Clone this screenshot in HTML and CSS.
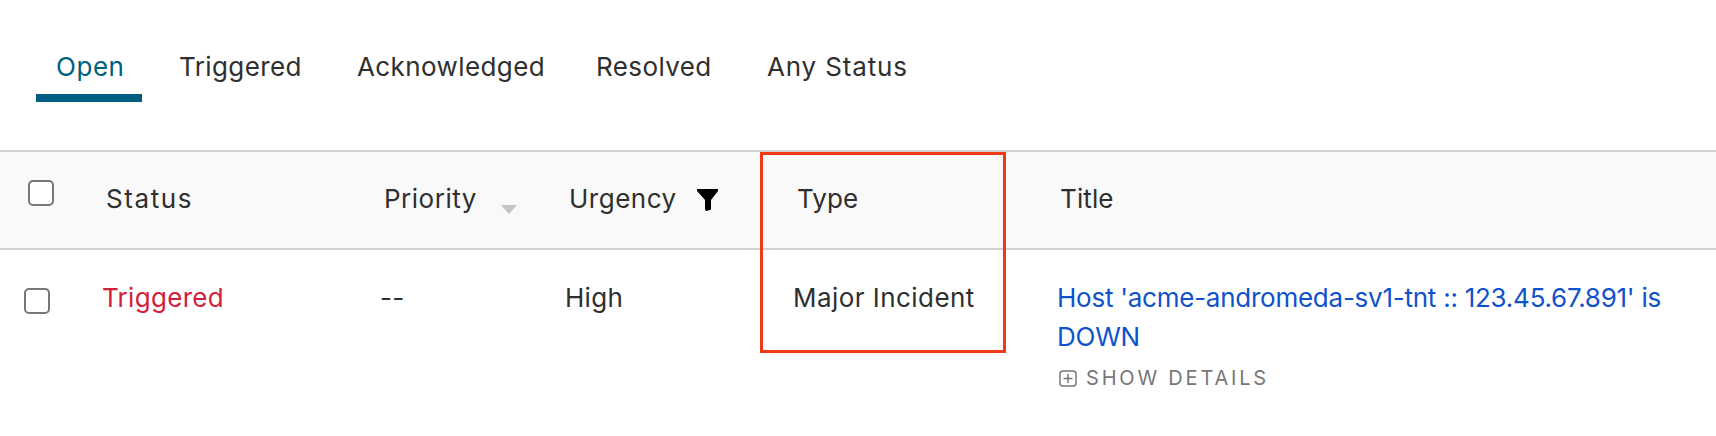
FILE: index.html
```html
<!DOCTYPE html>
<html lang="en">
<head>
    <meta charset="UTF-8">
    <title>Incidents</title>
    <link rel="stylesheet" href="styles.css">
</head>
<body>
    <nav class="tabs">
        <a class="tab active">Open</a>
        <a class="tab">Triggered</a>
        <a class="tab">Acknowledged</a>
        <a class="tab">Resolved</a>
        <a class="tab any-status">Any Status</a>
    </nav>

    <div class="table">
        <div class="row head">
            <div><span class="checkbox"></span></div>
            <div class="head-status">Status</div>
            <div class="with-icon">Priority
                <svg class="sort-icon" width="16" height="9" viewBox="0 0 16 9"><path d="M0 0h16L8 9z" fill="#c4c4c4"/></svg>
            </div>
            <div class="with-icon">Urgency
                <svg class="filter-icon" width="21" height="22" viewBox="0 0 21 22"><path d="M0 0h21v2l-7 9v9.500L9.500 22Q8 22 8 20V11L0 2z" fill="#000"/></svg>
            </div>
            <div class="head-plain">Type</div>
            <div class="head-plain">Title</div>
        </div>

        <div class="row body">
            <div><span class="checkbox"></span></div>
            <div class="status-triggered">Triggered</div>
            <div>--</div>
            <div>High</div>
            <div class="type-cell">Major Incident</div>
            <div class="title-cell">
                <a class="title-link">Host 'acme-andromeda-sv1-tnt :: 123.45.67.891' is DOWN</a>
                <div class="show-details">
                    <svg width="18" height="17" viewBox="0 0 18 17"><rect x="1" y="1" width="16" height="15" rx="3" fill="none" stroke="#777" stroke-width="1.500"/><path d="M9 4v9M4.500 8.500h9" stroke="#777" stroke-width="1.500"/></svg>
                    SHOW DETAILS
                </div>
            </div>
        </div>

        <div class="highlight"></div>
    </div>
</body>
</html>
```

FILE: styles.css
```css
body {
    margin: 0;
    font-family: Inter, "Liberation Sans", sans-serif;
    font-size: 26px;
    color: #2f2f2f;
    background-color: white;
    height: 436px;
    overflow: hidden;
}

.tabs {
    display: grid;
    grid-template-columns: 123px 178px 239px 171px auto;
    justify-items: start;
    height: 102px;
    padding: 48px 0 0 36px;
    box-sizing: border-box;
    margin-bottom: 48px;
    letter-spacing: 0.4px;
}

.tab {
    padding: 0 18px 0 20px;
    line-height: 38px;
    height: 46px;
}

.tab.active {
    color: #005f80;
    border-bottom: 8px solid #005f80;
    letter-spacing: 0.55px;
    padding-right: 17px;
}

.any-status {
    letter-spacing: 0.85px;
}

.table {
    position: relative;
    border-top: 2px solid #cfcfcf;
}

.row {
    display: grid;
    grid-template-columns: 78px 278px 185px 228px 263px 1fr;
    align-items: start;
}

.head {
    height: 96px;
    padding-left: 28px;
    background-color: #f9f9f9;
    border-bottom: 2px solid #cfcfcf;
    letter-spacing: 0.5px;
}

.head > div {
    padding-top: 27px;
    line-height: 40px;
}

.head-status {
    letter-spacing: 1.6px;
}

.head-plain {
    letter-spacing: 0.1px;
}

.body {
    padding: 28px 0 0 24px;
    line-height: 39px;
    letter-spacing: 0.3px;
}

.checkbox {
    display: block;
    width: 26px;
    height: 26px;
    box-sizing: border-box;
    border: 2px solid #777;
    border-radius: 5px;
    background-color: white;
}

.head .checkbox {
    margin-top: 1px;
}

.body .checkbox {
    margin-top: 10px;
}

.with-icon {
    position: relative;
}

.sort-icon {
    position: absolute;
    left: 117px;
    top: 53px;
}

.filter-icon {
    position: absolute;
    left: 128px;
    top: 37px;
}

.status-triggered {
    color: #d2213a;
}

.type-cell {
    letter-spacing: 0.45px;
}

.title-cell {
    padding-left: 1px;
}

.title-link {
    color: #0f52cc;
    display: block;
    width: 650px;
    letter-spacing: -0.25px;
}

.show-details {
    display: flex;
    align-items: center;
    gap: 9px;
    margin: 10px 0 0 2px;
    font-size: 20px;
    line-height: 24px;
    letter-spacing: 2.8px;
    color: #777;
}

.highlight {
    position: absolute;
    left: 760px;
    top: 0;
    width: 246px;
    height: 201px;
    box-sizing: border-box;
    border: 3px solid #f03a14;
}
```
